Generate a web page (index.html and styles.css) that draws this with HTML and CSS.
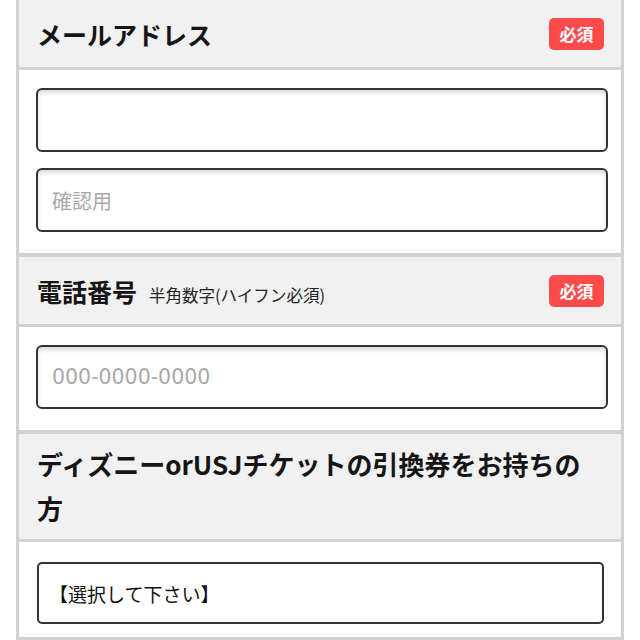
FILE: index.html
```html
<!DOCTYPE html>
<html lang="ja">
<head>
<meta charset="utf-8">
<title>フォーム</title>
<link rel="stylesheet" href="styles.css">
</head>
<body>
<div class="form">
  <section class="field">
    <div class="field-head">
      <h2 class="field-title">メールアドレス</h2>
      <span class="badge">必須</span>
    </div>
    <div class="field-body">
      <input class="text-input" type="email">
      <input class="text-input" type="email" placeholder="確認用">
    </div>
  </section>
  <section class="field">
    <div class="field-head">
      <h2 class="field-title">電話番号<span class="field-note">半角数字(ハイフン必須)</span></h2>
      <span class="badge">必須</span>
    </div>
    <div class="field-body">
      <input class="text-input text-input--tel" type="tel" placeholder="000-0000-0000">
    </div>
  </section>
  <section class="field">
    <div class="field-head field-head--multi">
      <h2 class="field-title field-title--long">ディズニーorUSJチケットの引換券をお持ちの方</h2>
    </div>
    <div class="field-body field-body--select">
      <select class="select">
        <option>【選択して下さい】</option>
      </select>
    </div>
  </section>
</div>
</body>
</html>
```

FILE: styles.css
```css
* {
  box-sizing: border-box;
}

html, body {
  margin: 0;
  padding: 0;
  background: #ffffff;
}

body {
  font-family: "Noto Sans CJK JP", "Noto Sans", sans-serif;
  color: #1a1a1a;
}

.form {
  margin-left: 16px;
  width: 608px;
  border-left: 3px solid #d2d2d2;
  border-right: 3px solid #d2d2d2;
}

.field-head {
  display: flex;
  align-items: center;
  justify-content: space-between;
  background: #f1f1f1;
  padding: 12px 17px 11px 18px;
  border-bottom: 3px solid #d2d2d2;
}

.field-head--multi {
  padding: 8px 17px 9px 18px;
}

.field-title {
  margin: 0;
  font-size: 25px;
  line-height: 44px;
  font-weight: 700;
  color: #151515;
}

.field-title--long {
  font-size: 26px;
}

.field-note {
  margin-left: 12px;
  font-size: 16.5px;
  line-height: 1;
  font-weight: 400;
  color: #222;
}

.badge {
  flex: none;
  width: 55px;
  height: 32px;
  border-radius: 5px;
  background: #fd4a4a;
  color: #ffffff;
  font-size: 17px;
  font-weight: 700;
  line-height: 32px;
  text-align: center;
}

.field-body {
  display: flex;
  flex-direction: column;
  gap: 16px;
  padding: 18px 13px 21px 17px;
  border-bottom: 4px solid #d2d2d2;
}

.field-body--select {
  padding: 20px 17px 13px 18px;
}

.text-input {
  display: block;
  width: 100%;
  height: 64px;
  border: 2px solid #333333;
  border-radius: 6px;
  background: #ffffff;
  box-shadow: inset 0 3px 4px rgba(0, 0, 0, 0.14);
  padding: 0 14px;
  font-family: "Noto Sans CJK JP", sans-serif;
  font-size: 20px;
  color: #222;
  outline: none;
}

.text-input::placeholder {
  color: #a9a9a9;
}

.text-input--tel {
  font-family: "DejaVu Sans", "Noto Sans CJK JP", sans-serif;
  font-size: 20.5px;
}

.select {
  display: block;
  width: 100%;
  height: 62px;
  border: 2px solid #333333;
  border-radius: 5px;
  background: #ffffff;
  appearance: none;
  -webkit-appearance: none;
  padding: 0 10px;
  font-family: "Noto Sans CJK JP", sans-serif;
  font-size: 19px;
  color: #111;
}
```
